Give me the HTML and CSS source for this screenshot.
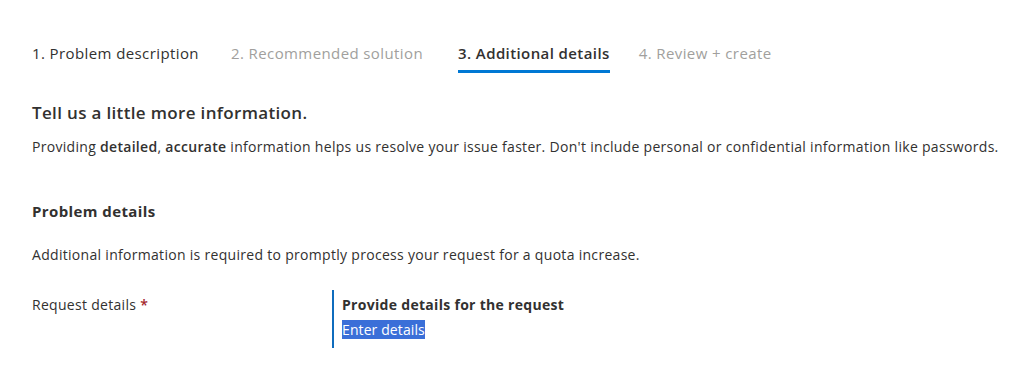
FILE: index.html
```html
<!DOCTYPE html>
<html lang="en">
<head>
    <meta charset="UTF-8">
    <meta name="viewport" content="width=device-width, initial-scale=1.0">
    <title>Additional details</title>
    <link rel="stylesheet" href="styles.css">
</head>
<body>
    <div class="page">
        <div class="tabs">
            <span class="tab done">1. Problem description</span>
            <span class="tab">2. Recommended solution</span>
            <span class="tab active">3. Additional details</span>
            <span class="tab">4. Review + create</span>
        </div>

        <h2 class="title">Tell us a little more information.</h2>
        <p class="intro">Providing <b>detailed</b>, <b>accurate</b> information helps us resolve your issue faster. Don't include personal or confidential information like passwords.</p>

        <h3 class="section">Problem details</h3>
        <p class="note">Additional information is required to promptly process your request for a quota increase.</p>

        <div class="field">
            <div class="label">Request details <span class="req">*</span></div>
            <div class="value">
                <div class="value-title">Provide details for the request</div>
                <div class="value-link"><span class="selected">Enter details</span></div>
            </div>
        </div>
    </div>
</body>
</html>
```

FILE: styles.css
```css
body, html {
    margin: 0;
    padding: 0;
    background: #fff;
    font-family: "Open Sans", "Noto Sans", sans-serif;
    color: #323130;
    letter-spacing: 0.3px;
}

.page {
    padding: 42px 8px 0 32px;
}

.tabs {
    display: flex;
    gap: 32px;
}

.tab {
    font-size: 15px;
    line-height: 22px;
    padding-bottom: 6px;
    color: #a19f9d;
    letter-spacing: 0.4px;
    border-bottom: 3px solid transparent;
}

.tab.done {
    color: #323130;
}

.tab.active {
    margin: 0 -3px 0 3px;
    color: #323130;
    font-weight: 600;
    border-bottom-color: #0078d4;
}

.title {
    margin: 28px 0 0 0;
    font-size: 17px;
    line-height: 24px;
    font-weight: 600;
    letter-spacing: 0.34px;
}

.intro {
    margin: 12px 0 0 0;
    font-size: 14px;
    line-height: 20px;
    white-space: nowrap;
}

.intro b {
    font-weight: 600;
}

.section {
    margin: 44px 0 0 0;
    font-size: 15px;
    line-height: 20px;
    font-weight: 700;
    letter-spacing: 0.4px;
}

.note {
    margin: 24px 0 0 0;
    font-size: 14px;
    line-height: 20px;
}

.field {
    display: flex;
    margin-top: 25px;
    font-size: 14px;
}

.label {
    width: 300px;
    padding-top: 5px;
    line-height: 20px;
}

.req {
    color: #a4262c;
    font-weight: 600;
}

.value {
    border-left: 2px solid #0f6cbd;
    padding: 5px 0 8px 8px;
}

.value-title {
    font-weight: 700;
    line-height: 20px;
}

.value-link {
    margin-top: 5px;
    line-height: 20px;
}

.selected {
    background: #3a6fd8;
    color: #fff;
    letter-spacing: 0.1px;
}
```
